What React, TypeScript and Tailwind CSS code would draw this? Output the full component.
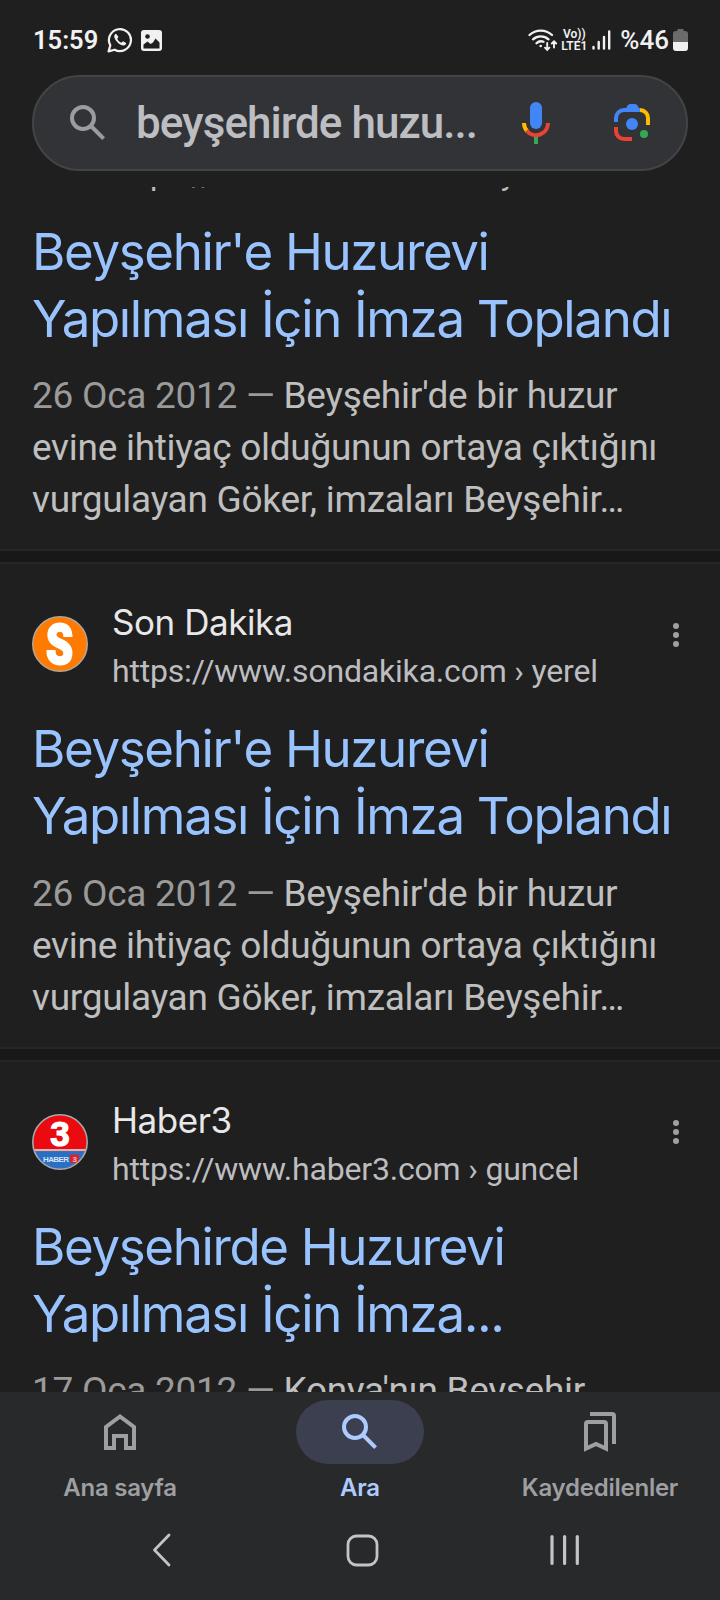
import type { ReactNode } from "react";

interface Result {
  site?: string;
  url: string;
  logo?: ReactNode;
  title: string[];
  date: string;
  snippet: string[];
}

const SonDakikaLogo = () => (
  <svg className="overflow-visible" width="56" height="56" viewBox="0 0 56 56">
    <circle cx="28" cy="28" r="27.2" fill="#ff7a00" stroke="#b5a594" strokeWidth="1.6" />
    <text x="27.5" y="47.5" textAnchor="middle" fontFamily="Roboto" fontWeight="900" fontSize="55" fill="#fff" stroke="#fff" strokeWidth="2.2" textLength="27" lengthAdjust="spacingAndGlyphs">
      S
    </text>
  </svg>
);

const Haber3Logo = () => (
  <svg width="56" height="56" viewBox="0 0 56 56">
    <defs>
      <clipPath id="haber">
        <circle cx="28" cy="28" r="27" />
      </clipPath>
    </defs>
    <g clipPath="url(#haber)">
      <rect width="56" height="36" fill="#ea0a10" />
      <rect y="35" width="56" height="2.5" fill="#d9b3bd" />
      <rect y="37.5" width="56" height="19" fill="#2a6fc4" />
      <rect x="38" y="40.5" width="9" height="8.5" fill="#d8232f" />
      <text x="28" y="31.5" textAnchor="middle" fontFamily="Liberation Sans" fontWeight="700" fontSize="35" fill="#fff" stroke="#fff" strokeWidth="1.2">3</text>
      <text x="11" y="48" fontFamily="Liberation Sans" fontWeight="700" fontSize="8" fill="#d5e4f5" textLength="26">HABER</text>
      <text x="40.5" y="48" fontFamily="Liberation Sans" fontWeight="700" fontSize="8" fill="#f3b9bd">3</text>
    </g>
    <circle cx="28" cy="28" r="27.2" fill="none" stroke="#a9a9ad" strokeWidth="1.6" />
  </svg>
);

const RESULTS: Result[] = [
  {
    url: "https://www.haberler.com › yerel",
    title: ["Beyşehir'e Huzurevi", "Yapılması İçin İmza Toplandı"],
    date: "26 Oca 2012",
    snippet: ["Beyşehir'de bir huzur", "evine ihtiyaç olduğunun ortaya çıktığını", "vurgulayan Göker, imzaları Beyşehir…"],
  },
  {
    site: "Son Dakika",
    url: "https://www.sondakika.com › yerel",
    logo: <SonDakikaLogo />,
    title: ["Beyşehir'e Huzurevi", "Yapılması İçin İmza Toplandı"],
    date: "26 Oca 2012",
    snippet: ["Beyşehir'de bir huzur", "evine ihtiyaç olduğunun ortaya çıktığını", "vurgulayan Göker, imzaları Beyşehir…"],
  },
  {
    site: "Haber3",
    url: "https://www.haber3.com › guncel",
    logo: <Haber3Logo />,
    title: ["Beyşehirde Huzurevi", "Yapılması İçin İmza..."],
    date: "17 Oca 2012",
    snippet: ["Konya'nın Beyşehir"],
  },
];

function StatusBar() {
  return (
    <div className="flex h-[75px] items-center justify-between pt-[5px] pl-[33px] pr-8 text-[#f1f1f1]">
      <div className="flex items-center">
        <span className="w-[74px] text-[25.5px] leading-8 font-semibold">15:59</span>
        {/* WhatsApp */}
        <svg width="26" height="26" viewBox="0 0 26 26" fill="none">
          <path d="M1.6 24.4l1.7-6A11 11 0 1 1 7.6 22.7z" stroke="#f1f1f1" strokeWidth="2.2" strokeLinejoin="round" />
          <path d="M9.1 6.8c-.6-.1-1.8.9-1.9 2.3-.2 3.8 5.4 9.6 9.3 9.4 1.5-.1 2.8-1.1 2.6-2.5l-3.1-1.7-1.6 1.5c-2-.8-3.4-2.2-4.2-4l1.3-1.7z" fill="#f1f1f1" />
        </svg>
        {/* Gallery */}
        <svg className="ml-2" width="21" height="21" viewBox="0 0 21 21">
          <rect width="21" height="21" rx="3" fill="#f1f1f1" />
          <circle cx="6.5" cy="6.5" r="2.3" fill="#1f1f1f" />
          <path d="M2.5 18.5v-4l4-3 3 2.5 2.500-1.500 2.500-4 4 4v6z" fill="#1f1f1f" />
        </svg>
      </div>
      <div className="flex items-center">
        <svg width="30" height="24" viewBox="0 0 30 24" fill="none" stroke="#f1f1f1" strokeWidth="2.3" strokeLinecap="round">
          <path d="M1.5 7a16.5 16.5 0 0 1 22.5 0M5 11.3a11.5 11.5 0 0 1 15.5 0M8.5 15.3a6.5 6.5 0 0 1 7-1.5" />
          <circle cx="12.7" cy="18" r="1.3" fill="#f1f1f1" stroke="none" />
          <path d="M19.2 15v6.5M17 19.7l2.2 2.2 2.2-2.2M26 19.5v-6M23.8 15.5l2.2-2.2 2.2 2.2" strokeWidth="1.9" />
        </svg>
        <div className="ml-[3px] flex w-[26px] flex-col items-center whitespace-nowrap text-[12px] leading-[12px] font-semibold">
          <span>Vo))</span>
          <span>LTE1</span>
        </div>
        <svg className="ml-[5px]" width="19" height="20" viewBox="0 0 19 20" stroke="#f1f1f1" strokeWidth="2.4" strokeLinecap="round">
          <path d="M1.5 17v1.5M6.7 12v6.500M12 7v11.500M17.200 1.500v17" />
        </svg>
        <span className="ml-[9px] text-[26px] leading-8 font-medium">%46</span>
        <svg className="ml-1" width="15" height="22" viewBox="0 0 15 22">
          <path d="M4.5 0h6v2H12a3 3 0 0 1 3 3v8H0V5a3 3 0 0 1 3-3h1.5z" fill="#6b6b6b" />
          <path d="M0 13h15v6a3 3 0 0 1-3 3H3a3 3 0 0 1-3-3z" fill="#f1f1f1" />
        </svg>
      </div>
    </div>
  );
}

function SearchIcon({ className }: { className?: string }) {
  return (
    <svg className={className} width="48" height="48" viewBox="0 0 24 24" fill="none" stroke="currentColor" strokeWidth="2">
      <circle cx="9.5" cy="9.5" r="5.5" />
      <path d="M13.5 13.5l6.3 6.3" />
    </svg>
  );
}

function SearchBar() {
  return (
    <div className="mx-8 flex h-24 items-center rounded-full border-2 border-[#444446] bg-[#323336]">
      <SearchIcon className="ml-[30px] text-[#9b9c9f]" />
      <span className="ml-6 w-[349px] whitespace-nowrap text-[44px] leading-[60px] font-medium tracking-[-0.95px] text-[#bdbec1]">
        beyşehirde huzu...
      </span>
      {/* Microphone */}
      <svg className="ml-9" width="30" height="42" viewBox="0 0 30 42" fill="none" strokeWidth="4">
        <rect x="9" width="12" height="27" rx="6" fill="#4285f4" />
        <path d="M13 33h4v9h-4z" fill="#34a853" />
        <path d="M3 21a12 12 0 0 0 3.5 8.5" stroke="#fbbc04" />
        <path d="M5.5 28.5A12 12 0 0 0 27 21" stroke="#ea4335" />
      </svg>
      {/* Lens */}
      <svg className="ml-[63px]" width="38" height="38" viewBox="0 0 38 38" fill="none" strokeWidth="4">
        <path d="M2 18v-4a8 8 0 0 1 8-8h16" stroke="#4285f4" />
        <path d="M11 6l2.5-4.5Q14.3 0 16 0h5q1.7 0 2.5 1.5L26 6z" fill="#4285f4" />
        <path d="M26 6a8 8 0 0 1 8 8v7" stroke="#fbbc04" />
        <path d="M2 23v4a8 8 0 0 0 8 8h8" stroke="#ea4335" />
        <circle cx="18" cy="20" r="6" fill="#4285f4" />
        <circle cx="30" cy="30" r="4" fill="#34a853" />
      </svg>
    </div>
  );
}

function ResultCard({ result }: { result: Result }) {
  return (
    <article className="h-[497.5px] shrink-0 px-8">
      <div className="-mx-8 h-[15px] border-y-2 border-[#262626] bg-[#181818]" />
      <header className="flex h-[151px] pt-[35px]">
        <div className="mt-[17px] h-14 w-14">{result.logo}</div>
        <div className="ml-[24px] flex-1 whitespace-nowrap">
          <div className="h-[46px] font-[Inter] text-[35px] leading-[46px] tracking-[-0.45px] text-[#e8e8e8]">{result.site}</div>
          <div className="mt-[3px] text-[32px] leading-[46px] tracking-[-0.19px] text-[#bdbdc0]">{result.url}</div>
        </div>
        <svg className="mt-[22.5px] mr-[9px]" width="6" height="26" viewBox="0 0 6 26" fill="#a0a0a0">
          <circle cx="3" cy="4" r="3" />
          <circle cx="3" cy="13" r="3" />
          <circle cx="3" cy="22" r="3" />
        </svg>
      </header>
      <h2 className="whitespace-nowrap font-[Inter] text-[51px] leading-[67px] tracking-[-1.35px] text-[#99c3ff]">
        {result.title.map((line) => (
          <div key={line}>{line}</div>
        ))}
      </h2>
      <div className="mt-[18.5px] whitespace-nowrap text-[37px] leading-[52px] tracking-[-0.27px] text-[#bfbfbf]">
        {result.snippet.map((line, i) => (
          <div key={line}>
            {i === 0 && <span className="text-[#9a9a9a]">{result.date} — </span>}
            {line}
          </div>
        ))}
      </div>
    </article>
  );
}

function BottomNav() {
  return (
    <nav className="grid h-[128px] grid-cols-3 justify-items-center font-[Inter] text-[24px] font-semibold tracking-[-0.25px] text-[#9e9fa1]">
      <div className="flex flex-col items-center">
        <div className="mt-2 flex h-16 w-32 items-center justify-center">
          <svg width="48" height="48" viewBox="0 0 24 24" fill="none" stroke="currentColor" strokeWidth="2">
            <path d="M5 20V9.5l7-5.25 7 5.25V20h-4v-6H9v6z" />
          </svg>
        </div>
        <span className="mt-2 leading-8">Ana sayfa</span>
      </div>
      <div className="flex flex-col items-center text-[#adcbff]">
        <div className="mt-2 flex h-16 w-32 items-center justify-center rounded-full bg-[#3b3f50]">
          <SearchIcon />
        </div>
        <span className="mt-2 leading-8">Ara</span>
      </div>
      <div className="flex flex-col items-center">
        <div className="mt-2 flex h-16 w-32 items-center justify-center">
          <svg width="48" height="48" viewBox="0 0 24 24" fill="none" stroke="currentColor" strokeWidth="2">
            <path d="M7 3h11a1 1 0 0 1 1 1v14" />
            <path d="M5 20.3V8a1 1 0 0 1 1-1h8a1 1 0 0 1 1 1v12.3l-5-2.3z" />
          </svg>
        </div>
        <span className="mt-2 leading-8">Kaydedilenler</span>
      </div>
    </nav>
  );
}

function SystemNav() {
  return (
    <div className="flex h-20 items-center pb-[20px] text-[#c4c4c5]">
      <svg className="ml-[152px]" width="20" height="34" viewBox="0 0 20 34" fill="none" stroke="currentColor" strokeWidth="2.8" strokeLinecap="round" strokeLinejoin="round">
        <path d="M17 2L2.5 17 17 32" />
      </svg>
      <svg className="ml-[174px]" width="33" height="33" viewBox="0 0 33 33" fill="none" stroke="currentColor" strokeWidth="2.8">
        <rect x="2" y="2" width="29" height="29" rx="8.5" />
      </svg>
      <svg className="ml-[170px]" width="31" height="32" viewBox="0 0 31 32" fill="none" stroke="currentColor" strokeWidth="3.2" strokeLinecap="round">
        <path d="M3 2.5v27M15.6 2.5v27M28.3 2.5v27" />
      </svg>
    </div>
  );
}

export default function App() {
  return (
    <div className="flex h-[1600px] w-[720px] flex-col overflow-hidden bg-[#1f1f1f] font-[Roboto]">
      <div className="h-[187px] shrink-0">
        <StatusBar />
        <SearchBar />
      </div>
      <main className="flex h-[1205px] shrink-0 flex-col justify-start overflow-hidden">
        {/* first result is scrolled partly under the header */}
        <div className="-mt-[135.5px] flex shrink-0 flex-col">
          {RESULTS.map((result) => (
            <ResultCard key={result.url} result={result} />
          ))}
        </div>
      </main>
      <footer className="h-[208px] shrink-0 bg-[#28292b]">
        <BottomNav />
        <SystemNav />
      </footer>
    </div>
  );
}
